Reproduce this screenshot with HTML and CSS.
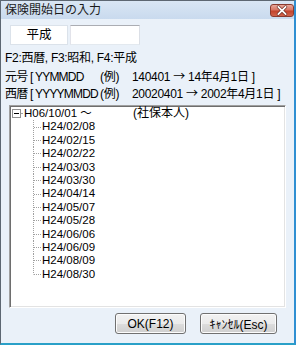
FILE: index.html
```html
<!DOCTYPE html>
<html lang="ja">

<head>
  <meta charset="UTF-8">
  <title>保険開始日の入力</title>
  <link rel="stylesheet" href="styles.css">
</head>

<body>
  <div class="window">
    <div class="titlebar">
      <span class="title">保険開始日の入力</span>
      <button class="close" type="button" aria-label="閉じる">
        <svg width="24" height="13" viewBox="0 0 24 13">
          <path d="M8 2.5 L16 10.5 M16 2.5 L8 10.5" stroke="#6b2a20" stroke-width="3.4" stroke-linecap="round" />
          <path d="M8 2.5 L16 10.5 M16 2.5 L8 10.5" stroke="#ffffff" stroke-width="2" stroke-linecap="round" />
        </svg>
      </button>
    </div>

    <div class="client">
      <div class="era-row">
        <div class="era-label">平成</div>
        <input class="era-input" type="text">
      </div>

      <div class="hints">
        <p class="hint">F2:西暦, F3:昭和, F4:平成</p>
        <p class="hint"><span class="hint-key">元号 [ YYMMDD</span><span class="hint-ex">(例)</span>140401 <span class="arrow">→</span> 14年4月1日 ]</p>
        <p class="hint"><span class="hint-key">西暦 [ YYYYMMDD</span><span class="hint-ex">(例)</span>20020401 <span class="arrow">→</span> 2002年4月1日 ]</p>
      </div>

      <div class="tree">
        <div class="tree-root">
          <span class="toggle">
            <svg width="9" height="9" viewBox="0 0 9 9">
              <rect x="0.5" y="0.5" width="8" height="8" fill="#fff" stroke="#919191" />
              <path d="M2 4.5 H7" stroke="#000" />
            </svg>
          </span>
          <span class="root-dash"></span>
          <span class="root-date">H06/10/01 ～</span>
          <span class="root-note">(社保本人)</span>
        </div>
        <ul class="tree-children">
          <li>H24/02/08</li>
          <li>H24/02/15</li>
          <li>H24/02/22</li>
          <li>H24/03/03</li>
          <li>H24/03/30</li>
          <li>H24/04/14</li>
          <li>H24/05/07</li>
          <li>H24/05/28</li>
          <li>H24/06/06</li>
          <li>H24/06/09</li>
          <li>H24/08/09</li>
          <li>H24/08/30</li>
        </ul>
      </div>

      <div class="buttons">
        <button class="btn btn-ok" type="button">OK(F12)</button>
        <button class="btn btn-cancel" type="button">ｷｬﾝｾﾙ(Esc)</button>
      </div>
    </div>
  </div>
</body>

</html>
```

FILE: styles.css
```css
:root {
  --ui-font: "Liberation Sans", "Noto Sans CJK JP", sans-serif;
  --cjk-font: "Noto Sans CJK JP", sans-serif;
  --client-bg: #eaf1f9;
  --tree-line: #a0a0a0;
}

body {
  margin: 0;
  font-family: var(--ui-font);
  font-size: 12px;
  color: #000;
}

.window {
  box-sizing: border-box;
  width: 296px;
  height: 345px;
  display: flex;
  flex-direction: column;
  border-top: 1px solid #5d6772;
  border-left: 1px solid #5d6772;
  border-right: 2px solid #2f8fd2;
  border-bottom: 2px solid #2aa0c8;
  background: var(--client-bg);
}

/* title bar */
.titlebar {
  height: 18px;
  display: flex;
  align-items: center;
  justify-content: space-between;
  padding-left: 4px;
  background: linear-gradient(#d9e6f4, #c9daee);
}

.title {
  font-size: 12px;
  line-height: 18px;
  color: #1a1a1a;
}

.close {
  box-sizing: border-box;
  width: 24px;
  height: 13px;
  margin: 1px 0 0 0;
  padding: 0;
  border: 1px solid #8a3a2e;
  border-radius: 3px;
  background: linear-gradient(#e8a89c 0%, #d77563 45%, #c3432c 55%, #d0644c 100%);
  display: flex;
  align-items: center;
  justify-content: center;
}

.close svg {
  display: block;
  margin-top: -1px;
}

/* client area */
.client {
  flex: 1;
  display: flex;
  flex-direction: column;
}

.era-row {
  display: flex;
  gap: 2px;
  margin: 6px 0 0 9px;
  height: 20px;
}

.era-label {
  box-sizing: border-box;
  width: 58px;
  height: 20px;
  background: #fff;
  border: 1px solid #dbe2ea;
  text-align: center;
  line-height: 18px;
  font-size: 12.5px;
}

.era-input {
  box-sizing: border-box;
  width: 70px;
  height: 20px;
  margin: 0;
  padding: 0 2px;
  background: #fff;
  border: 1px solid;
  border-color: #abadb3 #dbdfe6 #e3e9ef #e2e3ea;
  font-family: var(--ui-font);
  font-size: 12px;
}

.hints {
  margin: 5px 0 0 4px;
}

.hint {
  margin: 0;
  height: 17px;
  line-height: 17px;
  white-space: nowrap;
  letter-spacing: -0.3px;
}

.hint-key {
  display: inline-block;
  width: 95px;
  letter-spacing: -0.8px;
}

.hint-ex {
  display: inline-block;
  width: 32px;
}

.arrow {
  font-family: var(--cjk-font);
}

/* tree view */
.tree {
  box-sizing: border-box;
  height: 203px;
  margin: 4px 8px 0 8px;
  padding: 1px;
  background: #fff;
  border: 1px solid;
  border-color: #a0a0a0 #ffffff #ffffff #a0a0a0;
  box-shadow: inset 1px 1px 0 #6e6e6e, inset -1px -1px 0 #e3e3e3;
  font-size: 11.5px;
  line-height: 13.4px;
}

.tree-root {
  height: 13.4px;
  display: flex;
  align-items: center;
  white-space: nowrap;
}

.toggle {
  display: flex;
  margin-left: 1px;
}

.root-dash {
  width: 2px;
  height: 1px;
  background: var(--tree-line);
  margin-right: 1px;
}

.root-date {
  display: inline-block;
  width: 109px;
}

.root-note {
  font-size: 12px;
}

.tree-children {
  margin: 0;
  padding: 0;
  list-style: none;
}

.tree-children li {
  height: 13.4px;
  padding-left: 31px;
  white-space: nowrap;
  background-image:
    repeating-linear-gradient(to bottom, var(--tree-line) 0 1px, transparent 1px 2px),
    repeating-linear-gradient(to right, var(--tree-line) 0 1px, transparent 1px 2px);
  background-repeat: no-repeat;
  background-size: 1px 100%, 7px 1px;
  background-position: 22px 0, 23px 50%;
}

.tree-children li:last-child {
  background-size: 1px 50%, 7px 1px;
}

/* buttons */
.buttons {
  display: flex;
  justify-content: flex-end;
  gap: 14px;
  margin-top: 5px;
  padding-right: 17px;
}

.btn {
  box-sizing: border-box;
  height: 21px;
  margin: 0;
  padding: 0;
  border: 1px solid #707070;
  border-radius: 3px;
  background: linear-gradient(#f2f2f2 0%, #ebebeb 50%, #dddddd 51%, #cfcfcf 100%);
  box-shadow: inset 0 0 0 1px #fcfcfc;
  font-family: var(--ui-font);
  font-size: 12px;
  color: #000;
}

.btn-ok {
  width: 71px;
}

.btn-cancel {
  width: 77px;
}
```
